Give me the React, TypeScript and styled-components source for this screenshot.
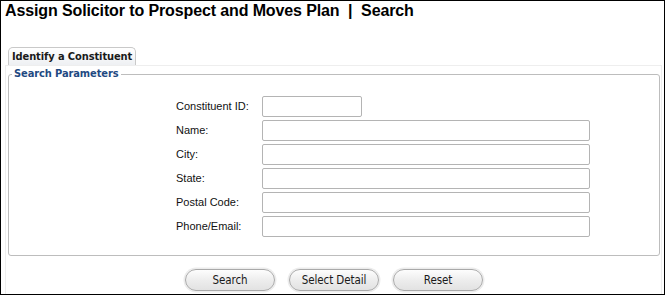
import React from "react";
import styled, { createGlobalStyle } from "styled-components";

const Global = createGlobalStyle`
  html, body { margin: 0; padding: 0; background: #fff; }
  * { box-sizing: border-box; }
`;

const Frame = styled.div`
  width: 665px;
  height: 295px;
  border: 1px solid #000;
  background: #fff;
  font-family: "Liberation Sans", Arial, sans-serif;
  display: flex;
  flex-direction: column;
  overflow: hidden;
`;

const Title = styled.h1`
  margin: 0;
  padding: 0 0 0 4px;
  font-size: 16px;
  line-height: 19px;
  font-weight: bold;
  color: #000;
  white-space: pre;
  letter-spacing: -0.12px;
`;

const TabStrip = styled.div`
  margin-top: 27px;
  padding-left: 7px;
  display: flex;
`;

const Tab = styled.div`
  height: 18px;
  padding: 0 3px 0 3px;
  border: 1px solid #c9c9c9;
  border-bottom: none;
  border-radius: 5px 5px 0 0;
  background: linear-gradient(#ffffff, #eef0f3);
  font-family: "DejaVu Sans Condensed", "DejaVu Sans", sans-serif;
  font-weight: bold;
  font-size: 11px;
  line-height: 18px;
  color: #1a1a1a;
  letter-spacing: -0.1px;
`;

const Panel = styled.div`
  flex: 1;
  margin: 0 2px 0 4px;
  border: 1px solid #eeeeee;
  border-bottom: none;
  padding: 0 1px 0 2px;
`;

const Fieldset = styled.fieldset`
  margin: 0;
  height: 190px;
  border: 1px solid #bdbdbd;
  border-radius: 3px;
  padding: 14px 0 0 0;
`;

const Legend = styled.legend`
  margin-left: 3px;
  padding: 0 2px;
  font-family: "DejaVu Sans Condensed", "DejaVu Sans", sans-serif;
  font-weight: bold;
  font-size: 11px;
  line-height: 16px;
  color: #1f4a82;
  letter-spacing: -0.1px;
`;

const FormGrid = styled.div`
  margin-left: 167px;
  display: grid;
  grid-template-columns: 86px 328px;
  row-gap: 3px;
  align-items: center;
`;

const Label = styled.label`
  font-size: 11px;
  color: #111;
  line-height: 21px;
`;

const Input = styled.input<{ $w?: number }>`
  width: ${(p) => (p.$w ? `${p.$w}px` : "100%")};
  height: 21px;
  border: 1px solid #b4b4b4;
  border-radius: 2px;
  background: #fff;
  padding: 0 3px;
  font-size: 11px;
  outline: none;
`;

const ButtonRow = styled.div`
  display: flex;
  justify-content: center;
  gap: 14px;
  margin-top: 13px;
`;

const Button = styled.button`
  width: 90px;
  height: 22px;
  border: 1px solid #a9a9a9;
  border-radius: 11px;
  background: linear-gradient(#fdfdfd, #ececec 55%, #e2e2e2);
  box-shadow: 0 0 0 1.5px #ececec;
  font-family: "DejaVu Sans Condensed", "DejaVu Sans", sans-serif;
  font-size: 11.5px;
  color: #1a1a1a;
  padding: 0;
  letter-spacing: -0.1px;
`;

const fields: { label: string; w?: number }[] = [
  { label: "Constituent ID:", w: 100 },
  { label: "Name:" },
  { label: "City:" },
  { label: "State:" },
  { label: "Postal Code:" },
  { label: "Phone/Email:" },
];

export default function App() {
  return (
    <>
      <Global />
      <Frame>
        <Title>{"Assign Solicitor to Prospect and Moves Plan  |  Search"}</Title>
        <TabStrip>
          <Tab>Identify a Constituent</Tab>
        </TabStrip>
        <Panel>
          <Fieldset>
            <Legend>Search Parameters</Legend>
            <FormGrid>
              {fields.map((f) => (
                <React.Fragment key={f.label}>
                  <Label>{f.label}</Label>
                  <Input $w={f.w} />
                </React.Fragment>
              ))}
            </FormGrid>
          </Fieldset>
          <ButtonRow>
            <Button>Search</Button>
            <Button>Select Detail</Button>
            <Button>Reset</Button>
          </ButtonRow>
        </Panel>
      </Frame>
    </>
  );
}
